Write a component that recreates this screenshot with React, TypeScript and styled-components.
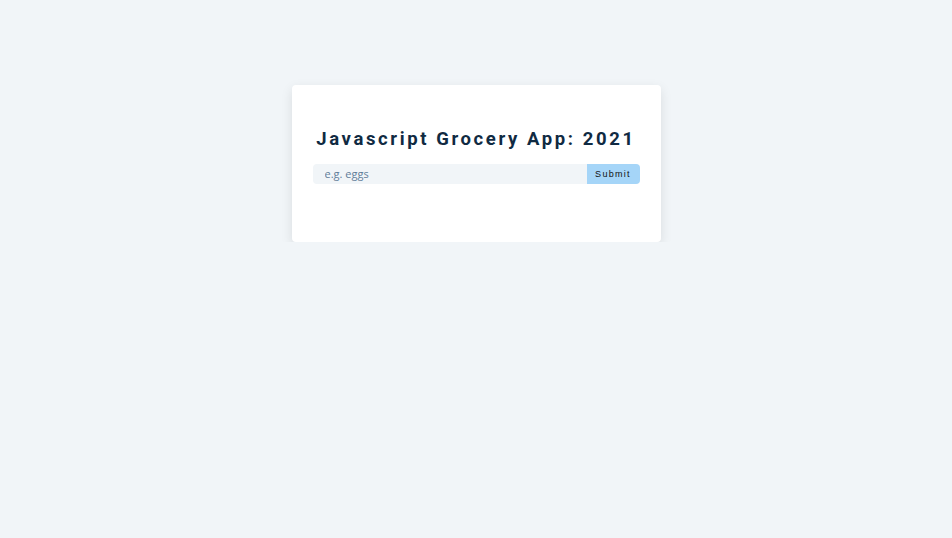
import React from 'react';
import styled, { createGlobalStyle } from 'styled-components';

const GlobalStyle = createGlobalStyle`
  * {
    box-sizing: border-box;
  }
  body {
    margin: 0;
    background: #f1f5f8;
    font-family: 'Open Sans', sans-serif;
    color: #102a42;
  }
`;

const Card = styled.section`
  width: 369px;
  margin: 85px auto 0;
  padding: 21px 21px 58px;
  background: #fff;
  border-radius: 4px;
  box-shadow: 0 4px 12px rgba(0, 0, 0, 0.1);
`;

const Form = styled.form`
  padding-top: 21px;
`;

const Title = styled.h3`
  margin: 0 0 12px;
  font-family: Roboto, sans-serif;
  font-size: 18.5px;
  font-weight: 700;
  line-height: 25px;
  letter-spacing: 2.6px;
  white-space: nowrap;
  text-align: center;
  color: #102a42;
`;

const Control = styled.div`
  display: flex;
  justify-content: center;
  height: 20px;
`;

const Input = styled.input`
  flex: 1 0 auto;
  min-width: 0;
  padding: 0 0 2px 11px;
  background: #f1f5f8;
  border: 1px solid transparent;
  border-radius: 4px 0 0 4px;
  font-family: 'Open Sans', sans-serif;
  font-size: 11px;
  color: #617d98;
  outline: none;

  &::placeholder {
    color: #617d98;
  }
`;

const SubmitButton = styled.button`
  flex: 0 0 53px;
  padding: 0;
  background: #a5d5f8;
  border: 1px solid transparent;
  border-radius: 0 4px 4px 0;
  font-family: 'Liberation Sans', Arial, sans-serif;
  font-size: 9px;
  letter-spacing: 1.3px;
  color: #111;
  cursor: pointer;
`;

const App: React.FC = () => {
  return (
    <>
      <GlobalStyle />
      <Card>
        <Form onSubmit={(e) => e.preventDefault()}>
          <Title>Javascript Grocery App: 2021</Title>
          <Control>
            <Input type="text" placeholder="e.g. eggs" />
            <SubmitButton type="submit">Submit</SubmitButton>
          </Control>
        </Form>
      </Card>
    </>
  );
};

export default App;
